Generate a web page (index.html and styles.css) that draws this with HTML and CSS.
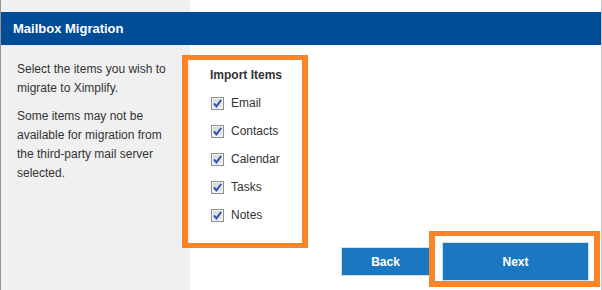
FILE: index.html
```html
<!DOCTYPE html>
<html lang="en">
<head>
  <meta charset="UTF-8" />
  <meta name="viewport" content="width=device-width, initial-scale=1.0"/>
  <title>Mailbox Migration</title>
  <link rel="stylesheet" href="styles.css">
</head>
<body>

<div class="page">
  <div class="top-strip"></div>

  <header>
    <h2>Mailbox Migration</h2>
  </header>

  <div class="content">
    <aside class="side">
      <p>Select the items you wish to migrate to Ximplify.</p>
      <p>Some items may not be available for migration from the third-party mail server selected.</p>
    </aside>

    <main class="panel">
      <div class="import">
        <h3>Import Items</h3>
        <label class="opt"><input type="checkbox" checked><span class="box"><svg width="13" height="13" viewBox="0 0 13 13"><path d="M3 6.3 L5.4 9.4 L10.2 3" fill="none" stroke="#2f4fa8" stroke-width="1.9"/></svg></span>Email</label>
        <label class="opt"><input type="checkbox" checked><span class="box"><svg width="13" height="13" viewBox="0 0 13 13"><path d="M3 6.3 L5.4 9.4 L10.2 3" fill="none" stroke="#2f4fa8" stroke-width="1.9"/></svg></span>Contacts</label>
        <label class="opt"><input type="checkbox" checked><span class="box"><svg width="13" height="13" viewBox="0 0 13 13"><path d="M3 6.3 L5.4 9.4 L10.2 3" fill="none" stroke="#2f4fa8" stroke-width="1.9"/></svg></span>Calendar</label>
        <label class="opt"><input type="checkbox" checked><span class="box"><svg width="13" height="13" viewBox="0 0 13 13"><path d="M3 6.3 L5.4 9.4 L10.2 3" fill="none" stroke="#2f4fa8" stroke-width="1.9"/></svg></span>Tasks</label>
        <label class="opt"><input type="checkbox" checked><span class="box"><svg width="13" height="13" viewBox="0 0 13 13"><path d="M3 6.3 L5.4 9.4 L10.2 3" fill="none" stroke="#2f4fa8" stroke-width="1.9"/></svg></span>Notes</label>
      </div>

      <div class="actions">
        <button class="back-btn">Back</button>
        <button class="next-btn">Next</button>
      </div>
    </main>
  </div>

  <!-- annotation boxes -->
  <div class="mark mark-items"></div>
  <div class="mark mark-next"></div>
</div>

</body>
</html>
```

FILE: styles.css
```css
body {
  margin: 0; font-family: "Liberation Sans", Arial, sans-serif; font-size: 12px;
  color: #333; background: #fff;
}
.page {
  position: relative;
  width: 600px; height: 290px;
  border-left: 1px solid #9a9592;
  border-right: 1px solid #c8c8c8;
  background: linear-gradient(to right, #f0f0f0 189px, #fff 189px);
  overflow: hidden;
}
.top-strip { height: 12px; }
header {
  background-color: #004c97; color: white;
  height: 33px; display: flex; align-items: center;
  padding-left: 12px;
}
header h2 { margin: 0; font-size: 13px; font-weight: bold; }

.content {
  display: grid; grid-template-columns: 189px 1fr;
}
.side {
  padding: 15px 17px 0 16px;
}
.side p {
  margin: 0 0 9px; line-height: 19px;
}

.panel {
  padding-top: 16px;
}
.import {
  padding-left: 20px;
}
.import h3 {
  margin: 0; font-size: 12px; font-weight: bold;
  height: 28px; line-height: 28px;
}
.opt {
  display: flex; align-items: center;
  height: 28px; padding-left: 1px;
}
.opt input { display: none; }
.box {
  width: 11px; height: 11px; margin-right: 7px;
  border: 1px solid #8f8f8f;
  background: linear-gradient(#d8d8d8, #ececec);
  box-shadow: inset 0 0 0 1px #f4f4f4;
  position: relative;
}
.box svg { position: absolute; left: -1px; top: -1px; }

.actions {
  display: flex; justify-content: flex-end; align-items: center;
  gap: 12px; margin-top: 13px; padding-right: 12px;
}
button {
  background: #1a77c2; color: white;
  border: 1px solid #dcdcdc; font-family: inherit;
  font-size: 12px; font-weight: bold; cursor: pointer; padding: 0;
}
.back-btn { width: 89px; height: 29px; }
.next-btn { width: 147px; height: 39px; }

.mark {
  position: absolute; box-sizing: border-box;
  border: 6px solid #fd8327;
  border-top-width: 5px;
}
.mark-items { left: 181px; top: 55px; width: 126px; height: 193px; border-bottom-width: 5px; }
.mark-next { left: 428px; top: 231px; width: 171px; height: 56px; }
```
